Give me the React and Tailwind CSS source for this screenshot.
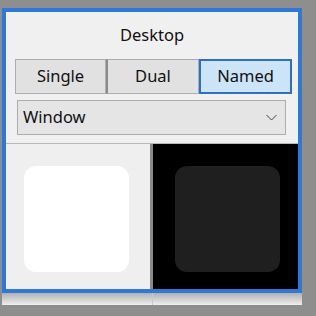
export default function App() {
    const font = { fontFamily: '"Noto Sans", "Open Sans", sans-serif' };

    return (
        <div className="w-[316px] h-[316px] bg-[#8e8e8e] relative overflow-hidden" style={font}>
            <div className="absolute left-[2px] top-[8px] w-[300px]">
                <div className="h-[285px] border-4 border-[#2f78d3] bg-[#f0f0f0] flex flex-col">
                    <div className="h-[47px] flex items-center justify-center text-[16.5px] text-[#111]">
                        Desktop
                    </div>
                    <div className="ml-[9px] mr-[6px] flex h-[35px] text-[16.5px] text-[#111]">
                        <button className="w-[91px] border border-[#adadad] bg-[#e1e1e1]">Single</button>
                        <button className="w-[93px] border border-[#adadad] border-l-2 border-l-[#8a8a8a] bg-[#e1e1e1]">Dual</button>
                        <button className="flex-1 border-2 border-[#2f6fbf] bg-[#cce4f7]">Named</button>
                    </div>
                    <div className="ml-[11px] mr-[12px] mt-[6px] h-[35px] flex items-center justify-between border border-[#adadad] bg-[#e5e5e5] pl-[5px] pr-[8px] text-[16.5px] text-[#111]">
                        <span>Window</span>
                        <svg width="11" height="7" viewBox="0 0 11 7" fill="none" stroke="#444" strokeWidth="1">
                            <path d="M0.5 1 L5.5 6 L10.5 1" />
                        </svg>
                    </div>
                    <div className="mt-[8px] flex-1 flex border-t border-[#b8b8b8]">
                        <div className="w-[144px] bg-[#efefef] flex items-start pl-[18px] pt-[22px]">
                            <div className="w-[105px] h-[106px] rounded-[12px] bg-white" />
                        </div>
                        <div className="w-[3px] bg-[#8a8a8a]" />
                        <div className="flex-1 bg-black flex items-start pl-[22px] pt-[22px]">
                            <div className="w-[105px] h-[106px] rounded-[12px] bg-[#1f1f1f]" />
                        </div>
                    </div>
                </div>
                <div className="h-[12px] flex bg-gradient-to-b from-[#b0b0b0] to-[#efefef]">
                    <div className="w-[150px]" />
                    <div className="w-[1px] bg-[#c8c8c8]" />
                </div>
            </div>
        </div>
    );
}
